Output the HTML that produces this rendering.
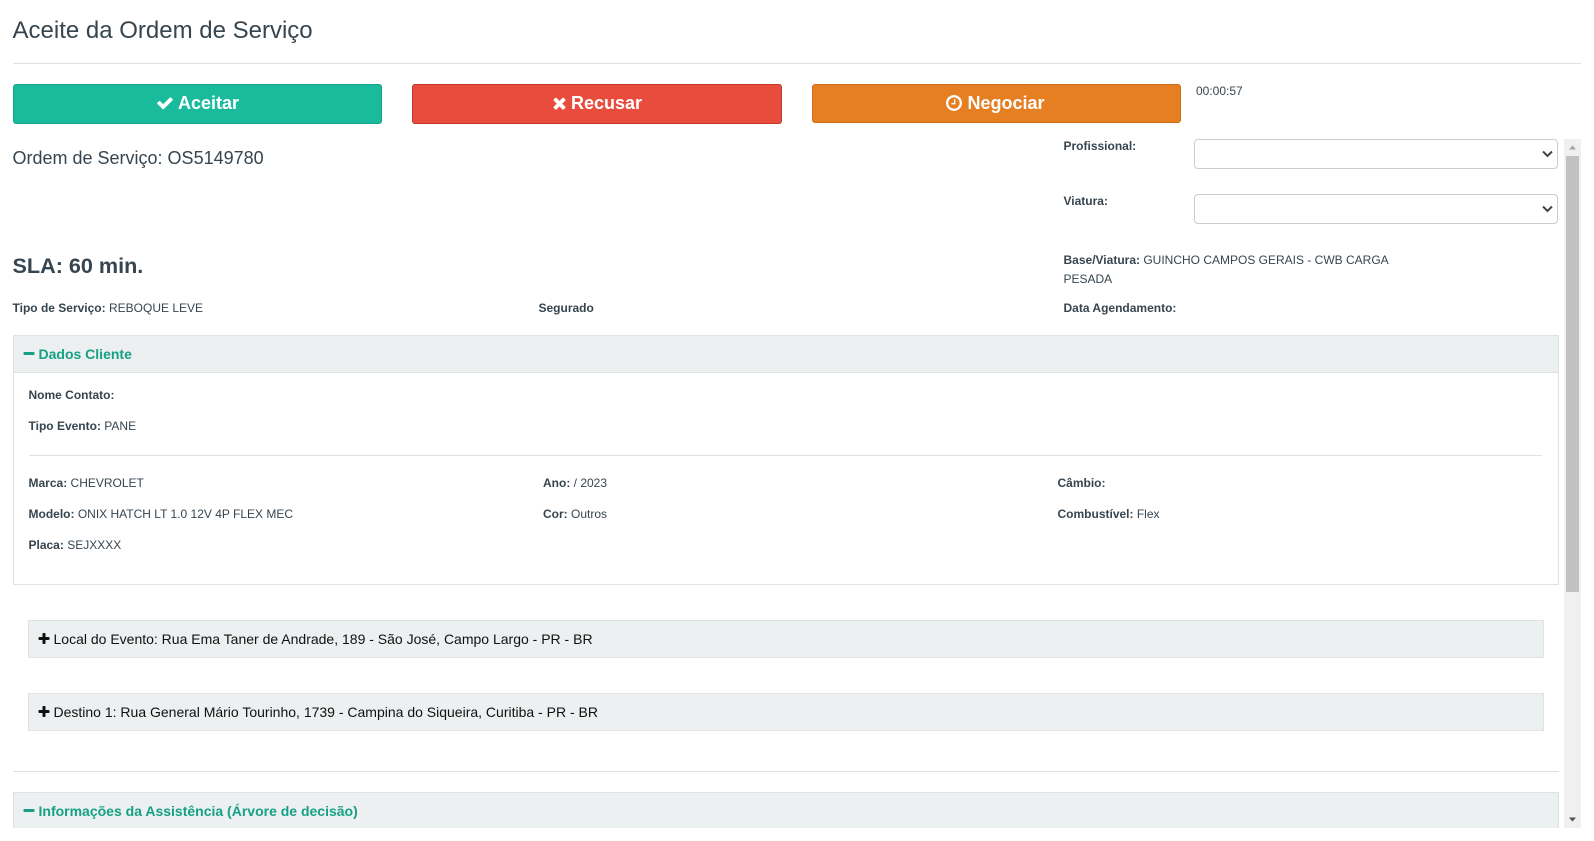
<!DOCTYPE html>
<html lang="pt"><head><meta charset="utf-8"><title>Aceite da Ordem de Serviço</title>
<style>
html,body{margin:0;padding:0;background:#fff;width:1594px;height:841px;overflow:hidden}
body{position:relative;font-family:"Liberation Sans",sans-serif;color:#36454f;font-size:12px}
.a{position:absolute;white-space:nowrap;line-height:20px}
.a b{font-weight:700}
.box{position:absolute;box-sizing:border-box}
.hr{position:absolute;height:1px;background:#dfe2e4}
.btn{position:absolute;box-sizing:border-box;top:84px;width:369px;height:40px;border-radius:3px;color:#fff;font-weight:700;font-size:18px;display:flex;align-items:center;justify-content:center;border:1px solid;padding-bottom:2px}
.btn svg{fill:#fff;width:18px;height:18px;margin-right:4px}
.sel{position:absolute;box-sizing:border-box;left:1194px;width:364px;height:30px;border:1px solid #ccc;border-radius:4px;background:#fff}
.sel svg{position:absolute;right:3px;top:7px;width:13px;height:13px}
.ph{position:absolute;box-sizing:border-box;background:#ecf0f1;border:1px solid #dfe3e4}
svg.i{position:absolute}
</style></head><body>
<div class="a" style="left:12.5px;top:17px;font-size:24px;line-height:28px">Aceite da Ordem de Serviço</div>
<div class="hr" style="left:13px;top:63px;width:1568px"></div>

<div class="btn" style="left:13px;background:#1abb9c;border-color:#17a689"><svg viewBox="0 0 1792 1792"><path d="M1671 566q0 40-28 68l-724 724-136 136q-28 28-68 28t-68-28l-136-136-362-362q-28-28-28-68t28-68l136-136q28-28 68-28t68 28l294 295 656-657q28-28 68-28t68 28l136 136q28 28 28 68z"/></svg>Aceitar</div>
<div class="btn" style="left:412px;width:370px;background:#e74c3c;border-color:#c0392b"><svg viewBox="0 0 1408 1792" style="width:15px"><path d="M1298 1322q0 40-28 68l-136 136q-28 28-68 28t-68-28l-294-294-294 294q-28 28-68 28t-68-28l-136-136q-28-28-28-68t28-68l294-294-294-294q-28-28-28-68t28-68l136-136q28-28 68-28t68 28l294 294 294-294q28-28 68-28t68 28l136 136q28 28 28 68t-28 68l-294 294 294 294q28 28 28 68z"/></svg>Recusar</div>
<div class="btn" style="left:812px;background:#e67e22;border-color:#d0701c;height:39px;padding-bottom:1px"><svg viewBox="128 128 1536 1536" style="width:16px;height:16px;margin-right:5px;margin-left:-2px"><path d="M1024 544v448q0 14-9 23t-23 9h-320q-14 0-23-9t-9-23v-64q0-14 9-23t23-9h224v-352q0-14 9-23t23-9h64q14 0 23 9t9 23zm416 352q0-148-73-273t-198-198-273-73-273 73-198 198-73 273 73 273 198 198 273 73 273-73 198-198 73-273zm224 0q0 209-103 385.5t-279.5 279.5-385.5 103-385.5-103-279.5-279.5-103-385.5 103-385.5 279.5-279.5 385.5-103 385.5 103 279.5 279.5 103 385.5z"/></svg>Negociar</div>
<div class="a" style="left:1196px;top:81px">00:00:57</div>

<div class="a" style="left:12.5px;top:148px;font-size:18px">Ordem de Serviço: OS5149780</div>
<div class="a" style="left:1063.5px;top:136px"><b>Profissional:</b></div>
<div class="sel" style="top:139px"><svg viewBox="0 0 13 13"><path d="M2 4.5l4.5 4.5 4.5-4.5" fill="none" stroke="#444" stroke-width="2"/></svg></div>
<div class="a" style="left:1063.5px;top:191px"><b>Viatura:</b></div>
<div class="sel" style="top:194px"><svg viewBox="0 0 13 13"><path d="M2 4.5l4.5 4.5 4.5-4.5" fill="none" stroke="#444" stroke-width="2"/></svg></div>

<div class="a" style="left:12.5px;top:256px;font-size:21.6px;font-weight:700">SLA: 60 min.</div>
<div class="a" style="left:1063.5px;top:250px"><b>Base/Viatura:</b> GUINCHO CAMPOS GERAIS - CWB CARGA</div>
<div class="a" style="left:1063.5px;top:269px">PESADA</div>
<div class="a" style="left:12.5px;top:298px"><b>Tipo de Serviço:</b> REBOQUE LEVE</div>
<div class="a" style="left:538.5px;top:298px"><b>Segurado</b></div>
<div class="a" style="left:1063.5px;top:298px"><b>Data Agendamento:</b></div>

<div class="box" style="left:13px;top:335px;width:1546px;height:250px;border:1px solid #dfe3e4"></div>
<div class="ph" style="left:13px;top:335px;width:1546px;height:38px"></div>
<svg class="i" viewBox="128 128 1536 1536" style="left:23px;top:348px;width:12px;height:12px;fill:#16a085"><path d="M1600 736v192q0 40-28 68t-68 28h-1216q-40 0-68-28t-28-68v-192q0-40 28-68t68-28h1216q40 0 68 28t28 68z"/></svg>
<div class="a" style="left:38.5px;top:344px;font-size:14px;font-weight:700;color:#16a085">Dados Cliente</div>
<div class="a" style="left:28.5px;top:385px"><b>Nome Contato:</b></div>
<div class="a" style="left:28.5px;top:416px"><b>Tipo Evento:</b> PANE</div>
<div class="hr" style="left:29px;top:455px;width:1513px"></div>
<div class="a" style="left:28.5px;top:473px"><b>Marca:</b> CHEVROLET</div>
<div class="a" style="left:543px;top:473px"><b>Ano:</b> / 2023</div>
<div class="a" style="left:1057.5px;top:473px"><b>Câmbio:</b></div>
<div class="a" style="left:28.5px;top:504px"><b>Modelo:</b> ONIX HATCH LT 1.0 12V 4P FLEX MEC</div>
<div class="a" style="left:543px;top:504px"><b>Cor:</b> Outros</div>
<div class="a" style="left:1057.5px;top:504px"><b>Combustível:</b> Flex</div>
<div class="a" style="left:28.5px;top:535px"><b>Placa:</b> SEJXXXX</div>

<div class="ph" style="left:28px;top:620px;width:1516px;height:38px"></div>
<svg class="i" viewBox="128 128 1536 1536" style="left:38px;top:633px;width:12px;height:12px;fill:#111"><path d="M1600 736v192q0 40-28 68t-68 28h-416v416q0 40-28 68t-68 28h-192q-40 0-68-28t-28-68v-416h-416q-40 0-68-28t-28-68v-192q0-40 28-68t68-28h416v-416q0-40 28-68t68-28h192q40 0 68 28t28 68v416h416q40 0 68 28t28 68z"/></svg>
<div class="a" style="left:53.5px;top:629px;font-size:14px;color:#111">Local do Evento: Rua Ema Taner de Andrade, 189 - São José, Campo Largo - PR - BR</div>

<div class="ph" style="left:28px;top:693px;width:1516px;height:38px"></div>
<svg class="i" viewBox="128 128 1536 1536" style="left:38px;top:706px;width:12px;height:12px;fill:#111"><path d="M1600 736v192q0 40-28 68t-68 28h-416v416q0 40-28 68t-68 28h-192q-40 0-68-28t-28-68v-416h-416q-40 0-68-28t-28-68v-192q0-40 28-68t68-28h416v-416q0-40 28-68t68-28h192q40 0 68 28t28 68v416h416q40 0 68 28t28 68z"/></svg>
<div class="a" style="left:53.5px;top:702px;font-size:14px;color:#111">Destino 1: Rua General Mário Tourinho, 1739 - Campina do Siqueira, Curitiba - PR - BR</div>

<div class="hr" style="left:13px;top:771px;width:1546px"></div>
<div class="ph" style="left:13px;top:792px;width:1546px;height:36px;border-bottom:0"></div>
<svg class="i" viewBox="128 128 1536 1536" style="left:23px;top:805px;width:12px;height:12px;fill:#16a085"><path d="M1600 736v192q0 40-28 68t-68 28h-1216q-40 0-68-28t-28-68v-192q0-40 28-68t68-28h1216q40 0 68 28t28 68z"/></svg>
<div class="a" style="left:38.5px;top:801px;font-size:14px;font-weight:700;color:#16a085">Informações da Assistência (Árvore de decisão)</div>

<div class="box" style="left:1564px;top:139px;width:17px;height:689px;background:#f0f0f0"></div>
<div class="box" style="left:1566px;top:156px;width:13px;height:436px;background:#c1c1c1"></div>
<svg class="i" viewBox="0 0 17 17" style="left:1564px;top:139px;width:17px;height:17px"><path d="M5 10.5h7L8.5 6.5z" fill="#a3a3a3"/></svg>
<svg class="i" viewBox="0 0 17 17" style="left:1564px;top:811px;width:17px;height:17px"><path d="M5 6.5h7L8.5 10.5z" fill="#505050"/></svg>
</body></html>
